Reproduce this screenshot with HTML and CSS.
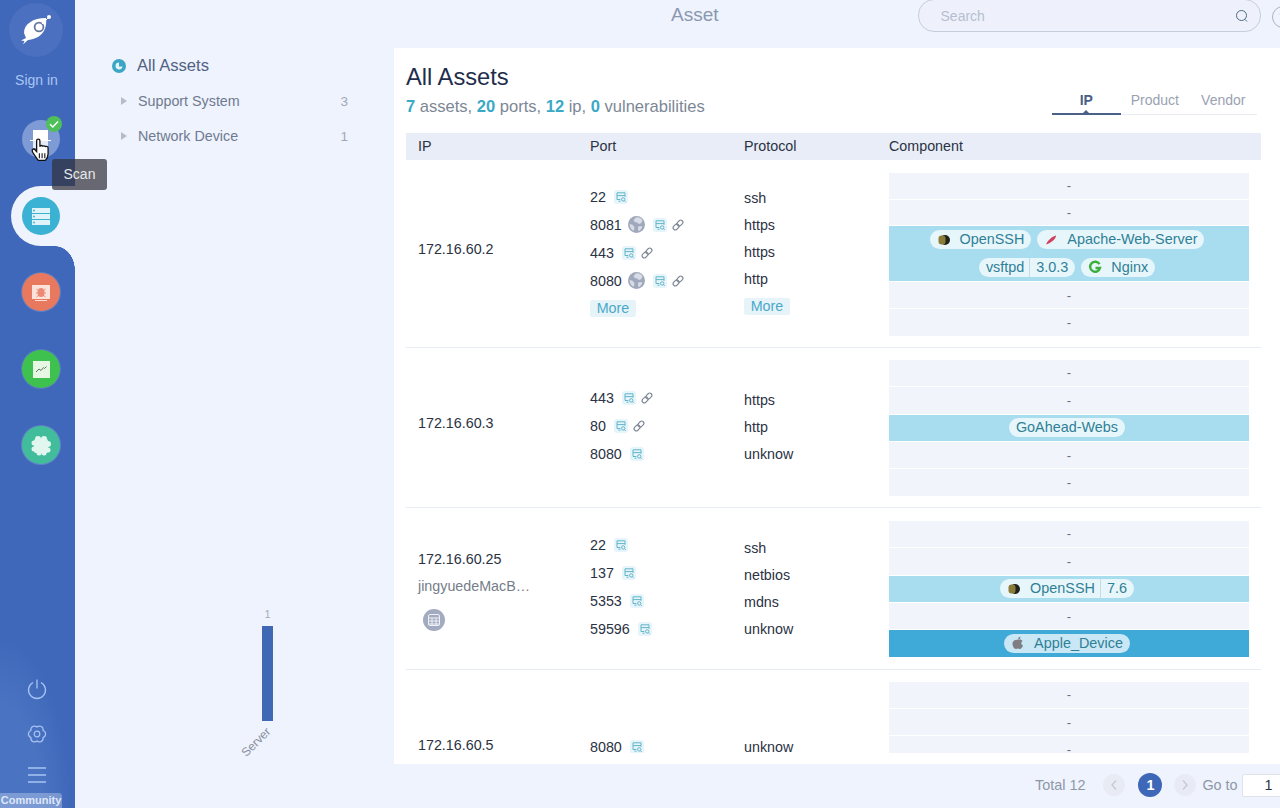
FILE: index.html
```html
<!DOCTYPE html>
<html lang="en">
<head>
<meta charset="utf-8">
<title>Asset</title>
<link rel="stylesheet" href="styles.css">
</head>
<body>
<svg class="sprite" aria-hidden="true">
  <symbol id="i-rec" viewBox="0 0 14 14">
    <rect width="14" height="14" rx="3" fill="#e6f5fa"/>
    <path d="M3 9.500V2.800h8v4M3 5.600h8M3 9.500h3.400M4.500 11.200h2" fill="none" stroke="#62b4cb" stroke-width="1"/>
    <circle cx="9.200" cy="9.400" r="1.700" fill="none" stroke="#62b4cb" stroke-width="1"/>
    <path d="M10.400 10.600l1.300 1.300" stroke="#62b4cb" stroke-width="1"/>
  </symbol>
  <symbol id="i-link" viewBox="0 0 14 14">
    <g fill="none" stroke="#7d8694" stroke-width="1.100" transform="rotate(-45 7 7)">
      <rect x="1" y="4.800" width="6.600" height="4.400" rx="2.200"/>
      <rect x="6.400" y="4.800" width="6.600" height="4.400" rx="2.200"/>
    </g>
  </symbol>
  <symbol id="i-globe" viewBox="0 0 17 17">
    <circle cx="8.500" cy="8.500" r="8.500" fill="#a0a8bc"/>
    <path d="M8 1.500c2.500-.6 5 .6 6.500 2.600l-1 3-2.500 1-2-1.600-2.400-.4L5.500 4zM10 10.500l3.500-.6.700 1.600L11.500 15 10 14zM1.500 8l3 .8 2 2.500-.7 3.500C3.500 14 1.800 11.500 1.500 8z" fill="#d8dce6"/>
  </symbol>
  <symbol id="i-ssh" viewBox="0 0 14 14">
    <circle cx="8" cy="7" r="5" fill="#20231c"/>
    <rect x="1.500" y="2.500" width="7" height="9" rx="3" fill="#8a7c38"/>
  </symbol>
</svg>

<div class="app">
  <aside class="sidebar">
    <div class="logo">
      <svg viewBox="0 0 54 54" width="54" height="54">
        <path d="M15 30C15 21 24 15 37 15c1 7-1 15-8 19-4 2-8 3-10 3l-5 4.500 1.500-3.500-3.500-.5 5-2.500z" fill="#fff"/>
        <circle cx="30" cy="24" r="4.400" fill="#fff" stroke="#65779f" stroke-width="1.800"/>
        <path d="M33 21l6-6" stroke="#fff" stroke-width="1"/>
        <circle cx="40" cy="14" r="2" fill="#fff"/>
      </svg>
    </div>
    <div class="signin">Sign in</div>
    <nav class="nav">
      <div class="nav-item nav-scan">
        <svg viewBox="0 0 38 38" width="38" height="38">
          <rect x="11" y="10" width="15" height="10" fill="#fff"/>
          <rect x="11" y="21" width="15" height="7" fill="#fff" opacity=".8"/>
          <path d="M8 20.500h21" stroke="#fff" stroke-width="1"/>
        </svg>
        <span class="check">
          <svg viewBox="0 0 16 16" width="16" height="16"><path d="M4 8.200l2.800 2.800L12 5.500" fill="none" stroke="#fff" stroke-width="1.500"/></svg>
        </span>
        <svg class="hand" viewBox="0 0 18 22" width="20" height="24">
          <path d="M5 2.500c0-2 3-2 3 0V8c0-1.500 2.500-1.500 2.500 0 0-1.200 2.500-1.200 2.500.3 .3-1 2.500-.8 2.500.8v5.400c0 3-1.500 5-2.500 6H6.500C5 18.500 1.500 13.500 1 12c-.5-1.800 1.500-2.500 2.500-1.200L5 12.500z" fill="#fff" stroke="#111" stroke-width="1.200"/>
          <path d="M7.500 14v4.500M10 14v4.500M12.500 14v4.500" stroke="#111" stroke-width="1"/>
        </svg>
        <span class="tooltip">Scan</span>
      </div>
      <div class="nav-item nav-asset">
        <svg viewBox="0 0 38 38" width="38" height="38">
          <g fill="#dff3f9"><rect x="10" y="11" width="18" height="5"/><rect x="10" y="17" width="18" height="5"/><rect x="10" y="23" width="18" height="5"/></g>
          <g fill="#3bb1d3"><circle cx="12" cy="13.500" r=".9"/><circle cx="12" cy="19.500" r=".9"/><circle cx="12" cy="25.500" r=".9"/></g>
        </svg>
      </div>
      <div class="nav-item nav-vuln">
        <svg viewBox="0 0 38 38" width="38" height="38">
          <rect x="10" y="12" width="18" height="14" fill="#fbe3dc"/>
          <path d="M13 27.500h12" stroke="#fbe3dc" stroke-width="1"/>
          <ellipse cx="19" cy="19.500" rx="3.500" ry="4.500" fill="#ec8a76"/>
          <path d="M14.500 16l2.500 2M23.500 16l-2.500 2M14 20h2M24 20h-2M14.500 24l2.500-2M23.500 24l-2.500-2" stroke="#ec8a76" stroke-width="1"/>
        </svg>
      </div>
      <div class="nav-item nav-chart">
        <svg viewBox="0 0 38 38" width="38" height="38">
          <rect x="11" y="11" width="17" height="17" fill="#e6f7e3"/>
          <path d="M14 22l3-3 2 1.500 2.500-3 1 1 2-2" fill="none" stroke="#5c7a5c" stroke-width="1"/>
        </svg>
      </div>
      <div class="nav-item nav-plug">
        <svg viewBox="0 0 38 38" width="38" height="38">
          <g fill="#e2f6f0">
            <rect x="12" y="13" width="14" height="14" rx="2"/>
            <circle cx="16" cy="13" r="3"/><circle cx="22" cy="13" r="3"/>
            <circle cx="26" cy="18" r="3"/><circle cx="26" cy="24" r="2.500"/>
            <circle cx="12" cy="17" r="2.500"/><circle cx="12" cy="23" r="2.500"/>
            <circle cx="17" cy="27" r="2.500"/><circle cx="22" cy="27" r="2.500"/>
          </g>
        </svg>
      </div>
    </nav>
    <div class="side-foot">
      <svg class="foot-icon" viewBox="0 0 22 22" width="22" height="22">
        <path d="M7 4.500a8.500 8.500 0 1 0 8 0M11 1.500v9" fill="none" stroke="#a8c4f3" stroke-width="1.300"/>
      </svg>
      <svg class="foot-icon" viewBox="0 0 22 22" width="22" height="22">
        <path d="M11 4A3.700 3.700 0 0 1 17.060 7.500 3.700 3.700 0 0 1 17.060 14.500 3.700 3.700 0 0 1 11 18 3.700 3.700 0 0 1 4.940 14.500 3.700 3.700 0 0 1 4.940 7.500 3.700 3.700 0 0 1 11 4z" fill="none" stroke="#a8c4f3" stroke-width="1.200"/>
        <circle cx="11" cy="11" r="2.800" fill="none" stroke="#a8c4f3" stroke-width="1.200"/>
      </svg>
      <svg class="foot-icon" viewBox="0 0 18 18" width="18" height="18">
        <path d="M0 2h18M0 9h18M0 16h18" stroke="#a8c4f3" stroke-width="1.300"/>
      </svg>
      <div class="community">Community</div>
    </div>
  </aside>

  <div class="content">
    <header class="topbar">
      <div class="page-title">Asset</div>
      <div class="search">
        <span class="search-text">Search</span>
        <svg viewBox="0 0 14 14" width="14" height="14"><circle cx="6.500" cy="6.500" r="5" fill="none" stroke="#4d6a80" stroke-width="1"/><path d="M10 10.500l2 2" stroke="#4d6a80" stroke-width="1"/></svg>
      </div>
      <div class="help">?</div>
    </header>

    <div class="work">
      <section class="tree">
        <div class="tree-root">
          <svg viewBox="0 0 14 14" width="14" height="14"><circle cx="7" cy="7" r="7" fill="#3aa6c6"/><path d="M7 3.500v4h3.500A3.500 3.500 0 1 1 7 3.500z" fill="#e5f3f9"/></svg>
          <span>All Assets</span>
        </div>
        <div class="tree-item"><i class="caret"></i><span class="tree-label">Support System</span><span class="tree-count">3</span></div>
        <div class="tree-item"><i class="caret"></i><span class="tree-label">Network Device</span><span class="tree-count">1</span></div>
        <div class="chart">
          <div class="chart-value">1</div>
          <div class="chart-bar"></div>
          <div class="chart-label">Server</div>
        </div>
      </section>

      <div class="right">
        <main class="panel">
          <div class="panel-head">
            <div class="heading">
              <h1>All Assets</h1>
              <p><b>7</b> assets, <b>20</b> ports, <b>12</b> ip, <b>0</b> vulnerabilities</p>
            </div>
            <div class="tabs">
              <span class="tab tab-on">IP</span>
              <span class="tab">Product</span>
              <span class="tab">Vendor</span>
            </div>
          </div>

          <div class="thead">
            <span>IP</span><span>Port</span><span>Protocol</span><span>Component</span>
          </div>

          <div class="tbody">
            <div class="row row-a">
              <div class="ip">172.16.60.2</div>
              <div class="ports">
                <div class="port"><span>22</span><svg class="ic"><use href="#i-rec"/></svg></div>
                <div class="port"><span>8081</span><svg class="globe"><use href="#i-globe"/></svg><svg class="ic"><use href="#i-rec"/></svg><svg class="ic lk"><use href="#i-link"/></svg></div>
                <div class="port"><span>443</span><svg class="ic"><use href="#i-rec"/></svg><svg class="ic lk"><use href="#i-link"/></svg></div>
                <div class="port"><span>8080</span><svg class="globe"><use href="#i-globe"/></svg><svg class="ic"><use href="#i-rec"/></svg><svg class="ic lk"><use href="#i-link"/></svg></div>
                <div class="port"><span class="more">More</span></div>
              </div>
              <div class="protos">
                <div>ssh</div><div>https</div><div>https</div><div>http</div><div><span class="more">More</span></div>
              </div>
              <div class="comps">
                <div class="comp">-</div>
                <div class="comp">-</div>
                <div class="comp comp-lit comp-tall">
                  <span class="tag"><svg class="tag-ic"><use href="#i-ssh"/></svg>OpenSSH</span>
                  <span class="tag"><svg class="tag-ic" viewBox="0 0 14 14"><path d="M2 11.500C4 7 8 3.500 12 2.500c0 3-4 7-10 9z" fill="#d0405f"/></svg>Apache-Web-Server</span>
                  <span class="tag"><span>vsftpd</span><span class="ver">3.0.3</span></span>
                  <span class="tag"><svg class="tag-ic" viewBox="0 0 14 14"><path d="M11.500 4.200A5 5 0 1 0 12 8H7.500" fill="none" stroke="#3cae3c" stroke-width="2.400"/></svg>Nginx</span>
                </div>
                <div class="comp">-</div>
                <div class="comp">-</div>
              </div>
            </div>

            <div class="row">
              <div class="ip">172.16.60.3</div>
              <div class="ports">
                <div class="port"><span>443</span><svg class="ic"><use href="#i-rec"/></svg><svg class="ic lk"><use href="#i-link"/></svg></div>
                <div class="port"><span>80</span><svg class="ic"><use href="#i-rec"/></svg><svg class="ic lk"><use href="#i-link"/></svg></div>
                <div class="port"><span>8080</span><svg class="ic"><use href="#i-rec"/></svg></div>
              </div>
              <div class="protos">
                <div>https</div><div>http</div><div>unknow</div>
              </div>
              <div class="comps">
                <div class="comp">-</div>
                <div class="comp">-</div>
                <div class="comp comp-lit"><span class="tag tag-plain">GoAhead-Webs</span></div>
                <div class="comp">-</div>
                <div class="comp">-</div>
              </div>
            </div>

            <div class="row row-c">
              <div class="ip ip-multi">
                <div>172.16.60.25</div>
                <div class="hostname">jingyuedeMacB…</div>
                <span class="host-ic">
                  <svg viewBox="0 0 14 14" width="14" height="14"><g fill="none" stroke="#eef1f7" stroke-width="1"><rect x="1.500" y="1.500" width="11" height="11" rx="1.500"/><path d="M1.500 5h11M1.500 8h11M1.500 11h11M5 5v8M9 5v8"/></g></svg>
                </span>
              </div>
              <div class="ports">
                <div class="port"><span>22</span><svg class="ic"><use href="#i-rec"/></svg></div>
                <div class="port"><span>137</span><svg class="ic"><use href="#i-rec"/></svg></div>
                <div class="port"><span>5353</span><svg class="ic"><use href="#i-rec"/></svg></div>
                <div class="port"><span>59596</span><svg class="ic"><use href="#i-rec"/></svg></div>
              </div>
              <div class="protos">
                <div>ssh</div><div>netbios</div><div>mdns</div><div>unknow</div>
              </div>
              <div class="comps">
                <div class="comp">-</div>
                <div class="comp">-</div>
                <div class="comp comp-lit"><span class="tag"><svg class="tag-ic"><use href="#i-ssh"/></svg><span>OpenSSH</span><span class="ver">7.6</span></span></div>
                <div class="comp">-</div>
                <div class="comp comp-deep"><span class="tag"><svg class="tag-ic" viewBox="0 0 14 14"><path d="M7.200 4c1-.6 3-.8 4.300 1-1.800 1.200-1.500 3.700.5 4.500-.8 2-2 3.500-3 3.500s-1.300-.5-2-.5-1.200.5-2 .5C3 13 1.500 10 1.500 7.500 1.500 4.500 5 3 7.200 4zM7 3.500C7 2 8 1 9.500 .8 9.500 2.300 8.500 3.500 7 3.500z" fill="#7e7e84"/></svg>Apple_Device</span></div>
              </div>
            </div>

            <div class="row">
              <div class="ip">172.16.60.5</div>
              <div class="ports">
                <div class="port"><span>8080</span><svg class="ic"><use href="#i-rec"/></svg></div>
              </div>
              <div class="protos"><div>unknow</div></div>
              <div class="comps">
                <div class="comp">-</div>
                <div class="comp">-</div>
                <div class="comp">-</div>
                <div class="comp">-</div>
                <div class="comp">-</div>
              </div>
            </div>
          </div>
        </main>

        <footer class="pager">
          <span class="total">Total 12</span>
          <span class="pg-btn">
            <svg viewBox="0 0 10 12" width="10" height="12"><path d="M7 1.500L3 6l4 4.500" fill="none" stroke="#c3c9d6" stroke-width="1.300"/></svg>
          </span>
          <span class="pg-num">1</span>
          <span class="pg-btn">
            <svg viewBox="0 0 10 12" width="10" height="12"><path d="M3 1.500L7 6l-4 4.500" fill="none" stroke="#c3c9d6" stroke-width="1.300"/></svg>
          </span>
          <span class="goto">Go to</span>
          <span class="goto-box">1</span>
        </footer>
      </div>
    </div>
  </div>
</div>
</body>
</html>
```

FILE: styles.css
```css
* { box-sizing: border-box; }
html, body { margin: 0; height: 100%; }
body {
  width: 1280px;
  height: 808px;
  overflow: hidden;
  background: #eff3fd;
  color: #2b3243;
  font-family: "Liberation Sans", Arial, sans-serif;
  font-size: 14.3px;
}
.sprite { display: none; }

.app { display: flex; width: 1280px; height: 808px; overflow: hidden; }

/* sidebar */
.sidebar {
  position: relative;
  z-index: 2;
  isolation: isolate;
  flex: 0 0 75px;
  display: flex;
  flex-direction: column;
  padding-top: 3px;
  background: radial-gradient(ellipse 70px 170px at 0 100%, #4a74c2 0, #4a74c2 60%, #3f68ba 100%) #3f68ba;
}
.logo {
  width: 54px;
  height: 54px;
  margin-left: 9px;
  border-radius: 50%;
  background: #4a70bf;
}
.logo svg { display: block; }
.signin {
  margin-top: 14px;
  width: 73px;
  text-align: center;
  font-size: 14px;
  line-height: 18px;
  color: #a9c6f5;
}
.nav { display: flex; flex-direction: column; gap: 38.500px; margin: 31px 0 0 22px; }
.nav-item { position: relative; width: 38px; height: 38px; border-radius: 50%; }
.nav-item > svg:first-child { display: block; }
.nav-scan { background: #7f9bd6; }
.nav-asset { background: #3bb1d3; }
.nav-asset::before {
  content: "";
  position: absolute;
  z-index: -1;
  left: -11px;
  top: -11px;
  width: 64px;
  height: 60px;
  border-radius: 30px 0 0 30px;
  background: #eff3fd;
}
.nav-asset::after {
  content: "";
  position: absolute;
  z-index: -1;
  left: 33px;
  top: 49px;
  width: 20px;
  height: 24px;
  background: radial-gradient(ellipse 20px 24px at 0 100%, transparent 98%, #eff3fd 100%);
}
.nav-vuln { background: #e8795f; box-shadow: 0 0 0 1px rgba(255,255,255,.15); }
.nav-chart { background: #3fc14f; box-shadow: 0 0 0 1px rgba(255,255,255,.12); }
.nav-plug { background: #42bd9c; box-shadow: 0 0 0 1px rgba(255,255,255,.18); }

.check {
  position: absolute;
  left: 24px;
  top: -4px;
  width: 16px;
  height: 16px;
  border-radius: 50%;
  background: #4fbf5a;
}
.check svg { display: block; }
.hand { position: absolute; left: 9px; top: 18px; }
.tooltip {
  position: absolute;
  left: 30px;
  top: 39px;
  width: 55px;
  height: 31px;
  border-radius: 3px;
  background: rgba(50,50,58,.72);
  color: #e8e8ea;
  font-size: 14px;
  line-height: 31px;
  text-align: center;
}

.side-foot { margin-top: auto; display: flex; flex-direction: column; align-items: flex-start; }
.foot-icon { display: block; margin-left: 26px; }
.foot-icon + .foot-icon { margin-top: 23px; }
.foot-icon:nth-child(3) { margin-left: 28px; margin-top: 21px; }
.community {
  width: 62px;
  height: 15px;
  margin-top: 9px;
  border-radius: 0 3px 0 0;
  background: rgba(255,255,255,.28);
  color: #dfe8f8;
  font-size: 11px;
  font-weight: 700;
  line-height: 15px;
  text-align: center;
}

/* content */
.content { flex: 1; min-width: 0; min-height: 0; display: flex; flex-direction: column; }
.topbar { flex: 0 0 48px; display: flex; align-items: flex-start; }
.page-title {
  margin: 5px 0 0 596px;
  font-size: 19px;
  line-height: 20px;
  color: #8a97b0;
}
.search {
  flex: 0 0 343px;
  height: 33px;
  margin: -1px 0 0 199px;
  padding: 0 11px 0 22px;
  display: flex;
  align-items: center;
  justify-content: space-between;
  border: 1px solid #c6cddd;
  border-radius: 16px;
  background: #eef1fb;
}
.search-text { font-size: 14px; color: #b7bed0; }
.help {
  flex: 0 0 22px;
  height: 22px;
  margin: 6px 0 0 11px;
  border: 1px solid #a9b3c6;
  border-radius: 50%;
  color: #a9b3c6;
  font-size: 13px;
  line-height: 20px;
  text-align: center;
}

.work { flex: 1; min-height: 0; display: flex; }

/* tree */
.tree {
  flex: 0 0 319px;
  display: flex;
  flex-direction: column;
  padding-top: 9px;
}
.tree-root {
  display: flex;
  align-items: center;
  gap: 11px;
  height: 18px;
  margin-left: 37px;
  font-size: 16.600px;
  color: #4f6284;
}
.tree-root svg { display: block; flex: none; }
.tree-item {
  display: flex;
  align-items: center;
  height: 18px;
  margin: 17px 46px 0;
  color: #6e7a8f;
}
.caret {
  flex: none;
  width: 0;
  height: 0;
  margin-right: 11px;
  border-left: 6px solid #b4bccb;
  border-top: 4.500px solid transparent;
  border-bottom: 4.500px solid transparent;
}
.tree-label { flex: 1; }
.tree-count { color: #a0a8b6; font-size: 13.500px; }

.chart {
  margin-top: auto;
  margin-left: 187px;
  width: 11px;
  padding-bottom: 59px;
}
.chart-value {
  height: 12px;
  margin-bottom: 6px;
  text-align: center;
  font-size: 11px;
  line-height: 12px;
  color: #a5adba;
}
.chart-bar { height: 95px; background: #4168b5; }
.chart-label {
  width: 44px;
  height: 14px;
  margin: 14px 0 0 -16px;
  font-size: 12px;
  line-height: 14px;
  text-align: center;
  color: #868e9c;
  transform: translateX(-12px) rotate(-45deg);
}

/* panel */
.right { flex: 1; min-width: 0; min-height: 0; display: flex; flex-direction: column; }
.panel {
  flex: 0 0 716px;
  min-height: 0;
  overflow: hidden;
  padding: 0 19px 11px 12px;
  background: #fff;
  display: flex;
  flex-direction: column;
}
.panel-head { flex: 0 0 85px; display: flex; justify-content: space-between; }
.heading h1 {
  margin: 15px 0 0;
  font-size: 23.700px;
  font-weight: 400;
  line-height: 28px;
  color: #1f2d4d;
}
.heading p {
  margin: 7px 0 0;
  font-size: 16.550px;
  line-height: 18px;
  color: #7c8796;
}
.heading b { color: #3aa9c5; font-weight: 700; }
.tabs {
  display: flex;
  align-self: flex-start;
  margin: 41px 4px 0 0;
  padding-top: 1px;
  width: 205px;
  height: 26px;
  border-bottom: 1px solid #e9ecf2;
}
.tab {
  position: relative;
  flex: 0 0 68.500px;
  text-align: center;
  font-size: 14px;
  line-height: 20px;
  color: #9aa2b2;
}
.tab-on { font-weight: 700; color: #4a6087; }
.tab-on::after {
  content: "";
  position: absolute;
  left: 0;
  right: 0;
  bottom: -1px;
  height: 2px;
  background: #4a6087;
}
.tab-on::before {
  content: "";
  position: absolute;
  left: 50%;
  bottom: 1px;
  margin-left: -3px;
  border-left: 3px solid transparent;
  border-right: 3px solid transparent;
  border-bottom: 3px solid #4a6087;
}

.thead, .row { display: grid; grid-template-columns: 184px 154px 145px 372px; }
.thead {
  flex: 0 0 27px;
  align-items: center;
  margin-bottom: 1px;
  padding-bottom: 2px;
  background: #e8edf7;
}
.thead span:first-child { padding-left: 12px; }
.tbody { flex: 1; min-height: 0; overflow: hidden; }
.row {
  padding: 12px 0 11px;
  align-items: center;
  border-bottom: 1px solid #e8ecf3;
}
.row-c { padding: 13px 0 12px; }
.row:last-child { border-bottom: 0; }

.ip { padding: 0 0 10px 12px; }
.ip-multi { padding: 2px 0 0 12px; line-height: 20px; }
.hostname { margin-top: 7px; color: #767d8a; }
.host-ic {
  display: flex;
  align-items: center;
  justify-content: center;
  width: 22px;
  height: 22px;
  margin: 13px 0 0 5px;
  border-radius: 50%;
  background: #a3abc0;
}

.ports { padding-bottom: 3px; }
.row:last-child .ports { padding-bottom: 5px; }
.port { display: flex; align-items: center; height: 28px; }
.port > span:first-child { margin-right: 8px; }
.ic { flex: none; width: 14px; height: 14px; }
.lk { margin-left: 4px; }
.globe { flex: none; width: 17px; height: 17px; margin: 0 8px 0 -2px; }
.more {
  display: inline-block;
  width: 46px;
  height: 17px;
  border-radius: 2px;
  background: #e6f4fa;
  color: #4aa9c8;
  line-height: 17px;
  text-align: center;
}
.protos > div { height: 27px; line-height: 27px; }
.row-a .protos, .row:last-child .protos { padding-bottom: 4px; }

.comps { display: flex; flex-direction: column; gap: 1px; width: 360px; }
.comp {
  min-height: 26.400px;
  display: flex;
  flex-wrap: wrap;
  align-items: center;
  justify-content: center;
  gap: 0 6px;
  background: #f1f4fa;
  color: #6a7280;
  line-height: 25px;
  font-size: 13px;
}
.row-a .comp:nth-child(-n+2) { min-height: 25.500px; }
.comp-lit { background: #a8ddf0; padding-right: 4px; }
.comp-deep { background: #3fa9d8; padding-right: 4px; }
.comp-tall { min-height: 55px; padding: 0 42px 0 38px; }
.tag {
  display: inline-flex;
  align-items: center;
  height: 19px;
  padding: 0 7px;
  border-radius: 10px;
  background: rgba(255,255,255,.72);
  color: #2f8096;
  font-size: 14.400px;
  line-height: 19px;
}
.comp-tall .tag { margin: 4px 0; }
.tag-ic { flex: none; width: 14px; height: 14px; margin: 0 9px 0 0; }
.ver {
  margin-left: 5px;
  padding-left: 6px;
  border-left: 1px solid #c8dbe4;
}

/* pager */
.pager {
  flex: 1;
  display: flex;
  align-items: center;
  padding: 0 0 2px 641px;
  color: #8e97a8;
  font-size: 14.400px;
}
.total { margin-right: 18px; white-space: nowrap; }
.pg-btn {
  flex: none;
  display: flex;
  align-items: center;
  justify-content: center;
  width: 22px;
  height: 22px;
  border-radius: 50%;
  background: #e8ebf4;
}
.pg-num {
  flex: none;
  width: 24px;
  height: 24px;
  margin: 0 12px 0 13px;
  border-radius: 50%;
  background: #3e67b8;
  color: #fff;
  line-height: 24px;
  text-align: center;
  font-weight: 700;
}
.goto { margin-left: 6px; white-space: nowrap; }
.goto-box {
  flex: none;
  width: 60px;
  height: 23px;
  margin-left: 4px;
  padding-left: 22px;
  border: 1px solid #dfe3ec;
  border-radius: 2px;
  background: #fff;
  color: #2b3243;
  line-height: 21px;
}
```
